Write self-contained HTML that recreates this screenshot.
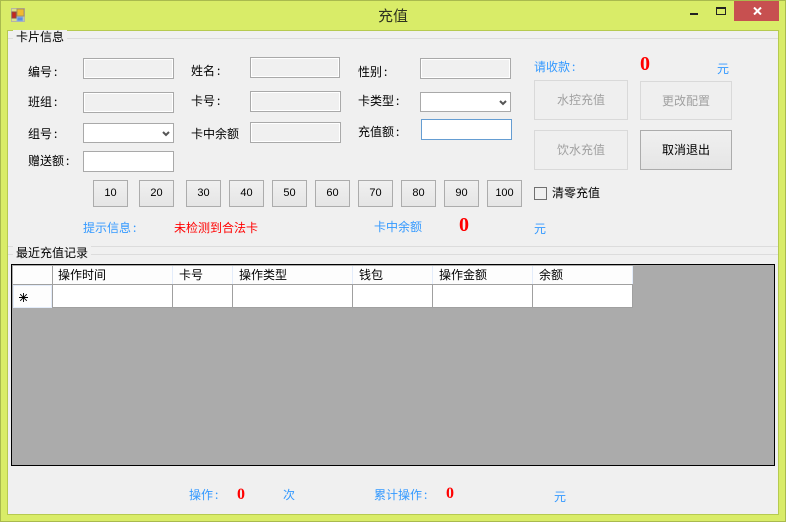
<!DOCTYPE html>
<html><head><meta charset="utf-8"><style>
*{box-sizing:border-box;margin:0;padding:0}
html,body{width:786px;height:522px;overflow:hidden;background:#d9ec68}
body{position:relative;font:12px/14px "WenQuanYi Zen Hei","Noto Sans CJK SC",sans-serif;color:#000}
.a{position:absolute}
.t{position:absolute;white-space:nowrap;height:14px;line-height:14px}
.c{letter-spacing:0;padding-left:2px}
.b{color:#3399ff}.r{color:#f00}
.z{position:absolute;font:bold 20px/20px "Liberation Serif",serif;color:#f00}
.z2{position:absolute;font:bold 16px/16px "Liberation Serif",serif;color:#f00}
.i{position:absolute;border:1px solid #a9a9a9;background:#f0f0f0;box-shadow:inset 0 0 0 1px #fff}
.w{position:absolute;border:1px solid #a9a9a9;background:#fff}
.btn{position:absolute;top:180px;height:27px;width:35px;border:1px solid #acacac;background:linear-gradient(#f0f0f0,#e5e5e5);text-align:center;line-height:25px;font-family:"Liberation Sans",sans-serif;font-size:11px}
.big{position:absolute;border:1px solid #d9d9d9;background:#efefef;color:#a0a0a0;text-align:center;line-height:38px}
.l{position:absolute;background:#dcdcdc;height:1px;left:8px;width:770px}
.v{position:absolute;width:1px;background:#a0a0a0;top:285px;height:22px}
.hs{position:absolute;width:1px;background:#e3ecfa;top:266px;height:18px}
</style></head><body>
<div class="a" style="left:0;top:0;width:786px;height:522px;border:1px solid #a9ba4e"></div>
<div class="a" style="left:7px;top:30px;width:772px;height:485px;border:1px solid #b6ca50;background:#f0f0f0"></div>

<svg class="a" style="left:11px;top:8px" width="14" height="14" viewBox="0 0 14 14" shape-rendering="crispEdges">
<rect x=".5" y=".5" width="13" height="13" fill="#d9e08a" stroke="#b5b5a5"/>
<rect x="6" y="1" width="7" height="7" fill="#f2b92d" stroke="#a8925a"/>
<rect x="1" y="4" width="4" height="6" fill="#c8261e" stroke="#8c4a40"/>
<rect x="6" y="9" width="6" height="4" fill="#5c8fe0" stroke="#8fb0e0"/>
</svg>
<div class="t" style="left:378px;top:8px;font-size:15px;line-height:16px;height:16px;color:#2f3320">充值</div>
<div class="a" style="left:690px;top:13px;width:8px;height:2px;background:#222"></div>
<div class="a" style="left:716px;top:7px;width:10px;height:8px;border:1px solid #222;border-top-width:2px"></div>
<div class="a" style="left:734px;top:1px;width:45px;height:20px;background:#c75050"></div>
<svg class="a" style="left:753px;top:7px" width="9" height="8" viewBox="0 0 9 8"><path d="M1 .5L8 7.5M8 .5L1 7.5" stroke="#fff" stroke-width="2" fill="none"/></svg>

<div class="l" style="top:38px"></div>
<div class="l" style="top:246px"></div>
<div class="l" style="top:254px"></div>
<div class="t" style="left:13px;top:30px;background:#f0f0f0;padding:0 3px">卡片信息</div>
<div class="t" style="left:13px;top:246px;background:#f0f0f0;padding:0 3px">最近充值记录</div>

<div class="t" style="left:28px;top:65px">编号<span class="c">:</span></div>
<div class="t" style="left:28px;top:95px">班组<span class="c">:</span></div>
<div class="t" style="left:28px;top:127px">组号<span class="c">:</span></div>
<div class="t" style="left:28px;top:154px">赠送额<span class="c">:</span></div>
<div class="t" style="left:191px;top:64px">姓名<span class="c">:</span></div>
<div class="t" style="left:191px;top:94px">卡号<span class="c">:</span></div>
<div class="t" style="left:191px;top:127px">卡中余额</div>
<div class="t" style="left:358px;top:65px">性别<span class="c">:</span></div>
<div class="t" style="left:358px;top:94px">卡类型<span class="c">:</span></div>
<div class="t" style="left:358px;top:125px">充值额<span class="c">:</span></div>

<div class="i" style="left:83px;top:58px;width:91px;height:21px"></div>
<div class="i" style="left:83px;top:92px;width:91px;height:21px"></div>
<div class="w" style="left:83px;top:123px;width:91px;height:20px"></div>
<svg class="a" style="left:162px;top:131px" width="8" height="6"><path d="M1 1L4 4L7 1" stroke="#555" stroke-width="2" fill="none"/></svg>
<div class="w" style="left:83px;top:151px;width:91px;height:21px"></div>
<div class="i" style="left:250px;top:57px;width:90px;height:21px"></div>
<div class="i" style="left:250px;top:91px;width:91px;height:21px"></div>
<div class="i" style="left:250px;top:122px;width:91px;height:21px"></div>
<div class="i" style="left:420px;top:58px;width:91px;height:21px"></div>
<div class="w" style="left:420px;top:92px;width:91px;height:20px"></div>
<svg class="a" style="left:499px;top:100px" width="8" height="6"><path d="M1 1L4 4L7 1" stroke="#555" stroke-width="2" fill="none"/></svg>
<div class="w" style="left:421px;top:119px;width:91px;height:21px;border-color:#659dd2"></div>

<div class="t b" style="left:534px;top:60px">请收款<span class="c">:</span></div>
<div class="z" style="left:640px;top:54px">0</div>
<div class="t b" style="left:717px;top:62px">元</div>
<div class="big" style="left:534px;top:80px;width:94px;height:40px">水控充值</div>
<div class="big" style="left:640px;top:81px;width:92px;height:39px">更改配置</div>
<div class="big" style="left:534px;top:130px;width:94px;height:40px">饮水充值</div>
<div class="big" style="left:640px;top:130px;width:92px;height:40px;border-color:#acacac;background:linear-gradient(#f0f0f0,#e5e5e5);color:#000">取消退出</div>

<div class="btn" style="left:93px">10</div>
<div class="btn" style="left:139px">20</div>
<div class="btn" style="left:186px">30</div>
<div class="btn" style="left:229px">40</div>
<div class="btn" style="left:272px">50</div>
<div class="btn" style="left:315px">60</div>
<div class="btn" style="left:358px">70</div>
<div class="btn" style="left:401px">80</div>
<div class="btn" style="left:444px">90</div>
<div class="btn" style="left:487px">100</div>
<div class="a" style="left:534px;top:187px;width:13px;height:13px;border:1px solid #707070;background:#f0f0f0"></div>
<div class="t" style="left:552px;top:186px">清零充值</div>

<div class="t b" style="left:83px;top:221px">提示信息<span class="c">:</span></div>
<div class="t r" style="left:174px;top:221px">未检测到合法卡</div>
<div class="t b" style="left:374px;top:220px">卡中余额</div>
<div class="z" style="left:459px;top:215px">0</div>
<div class="t b" style="left:534px;top:222px">元</div>

<div class="a" style="left:11px;top:264px;width:764px;height:202px;border:1px solid #000;background:#ababab"></div>
<div class="a" style="left:13px;top:266px;width:620px;height:19px;background:#fdfdfd;border-bottom:1px solid #a0a0a0"></div>
<div class="a" style="left:13px;top:285px;width:620px;height:23px;background:#fff;border-bottom:1px solid #a0a0a0"></div>
<div class="a" style="left:13px;top:285px;width:39px;height:23px;background:#fdfdfd;border:1px solid #e3ecfa"></div>
<div class="a" style="left:52px;top:266px;width:1px;height:19px;background:#a0a0a0"></div>
<div class="hs" style="left:172px"></div><div class="hs" style="left:232px"></div><div class="hs" style="left:352px"></div><div class="hs" style="left:432px"></div><div class="hs" style="left:532px"></div><div class="hs" style="left:632px"></div>
<div class="v" style="left:52px"></div><div class="v" style="left:172px"></div><div class="v" style="left:232px"></div><div class="v" style="left:352px"></div><div class="v" style="left:432px"></div><div class="v" style="left:532px"></div><div class="v" style="left:632px"></div>
<div class="t" style="left:58px;top:268px">操作时间</div>
<div class="t" style="left:179px;top:268px">卡号</div>
<div class="t" style="left:239px;top:268px">操作类型</div>
<div class="t" style="left:359px;top:268px">钱包</div>
<div class="t" style="left:439px;top:268px">操作金额</div>
<div class="t" style="left:539px;top:268px">余额</div>
<svg class="a" style="left:19px;top:293px" width="9" height="9" viewBox="0 0 9 9"><path d="M4.5 0V9M0 4.5H9M1.2 1.2L7.8 7.8M7.8 1.2L1.2 7.8" stroke="#000" stroke-width=".9" fill="none"/></svg>

<div class="t b" style="left:189px;top:488px">操作<span class="c">:</span></div>
<div class="z2" style="left:237px;top:487px">0</div>
<div class="t b" style="left:283px;top:488px">次</div>
<div class="t b" style="left:374px;top:488px">累计操作<span class="c">:</span></div>
<div class="z2" style="left:446px;top:486px">0</div>
<div class="t b" style="left:554px;top:490px">元</div>
</body></html>
